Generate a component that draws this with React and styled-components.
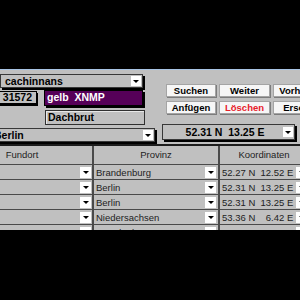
import React from "react"
import styled, { createGlobalStyle } from "styled-components"

const GlobalStyle = createGlobalStyle`
  html, body {
    margin: 0;
    padding: 0;
    background: #000;
  }
  body {
    width: 300px;
    height: 300px;
    overflow: hidden;
    font-family: "Liberation Sans", Arial, sans-serif;
  }
`

const Window = styled.div`
  margin-top: 69px;
  height: 160px;
  border-top: 1px solid #a8c4e4;
  background: #c0c0c0;
  overflow: hidden;
`

const Form = styled.div`
  display: grid;
  grid-template-columns: 162px 1fr;
  height: 74px;
`

const LeftCol = styled.div`
  display: flex;
  flex-direction: column;
  align-items: flex-start;
  padding-top: 4px;
`

const RightCol = styled.div`
  display: flex;
  flex-direction: column;
  align-items: flex-start;
  padding-top: 14px;
`

const Arrow = styled.span`
  display: flex;
  align-items: center;
  justify-content: center;
  flex: none;
  width: ${(p) => p.$size || 10}px;
  height: ${(p) => p.$size || 10}px;
  background: #fff;
  &::after {
    content: "";
    border-left: 3px solid transparent;
    border-right: 3px solid transparent;
    border-top: 3px solid #000;
  }
`

const Combo = styled.div`
  display: flex;
  align-items: center;
  justify-content: space-between;
  box-sizing: border-box;
  width: ${(p) => p.$w}px;
  height: ${(p) => p.$h || 14}px;
  margin-left: ${(p) => p.$ml || 0}px;
  margin-top: ${(p) => p.$mt || 0}px;
  padding: 0 1px 0 4px;
  border: 1px solid #383838;
  box-shadow: 2px 2px 0 #000;
  font-size: 10.5px;
  font-weight: bold;
  color: #000;
  white-space: pre;
`

const ComboText = styled.span`
  flex: 1;
  text-align: ${(p) => (p.$center ? "center" : "left")};
`

const Row = styled.div`
  display: flex;
  align-items: flex-start;
  margin-top: 2px;
`

const NumberBox = styled.div`
  box-sizing: border-box;
  width: 59px;
  height: 13px;
  margin: 1px 0 0 -22px;
  padding-right: 4px;
  border: 1px solid #000;
  box-shadow: 1px 2px 0 #000;
  text-align: right;
  font-size: 10.5px;
  font-weight: bold;
  line-height: 11px;
`

const ColorBox = styled.div`
  box-sizing: border-box;
  width: 99px;
  height: 16px;
  margin-left: 7px;
  padding-left: 2px;
  background: #560058;
  color: #fff;
  border: 1px solid #000;
  box-shadow: 2px 2px 0 #000;
  font-size: 10.5px;
  font-weight: bold;
  line-height: 13px;
  white-space: pre;
`

const TextBox = styled.div`
  box-sizing: border-box;
  width: 100px;
  height: 15px;
  margin: 4px 0 0 45px;
  padding-left: 2px;
  border: 1px solid #303030;
  box-shadow: inset 1px 1px 0 #e8e8e8;
  font-size: 10.5px;
  font-weight: bold;
  line-height: 13px;
`

const ButtonRow = styled.div`
  display: flex;
  gap: 3px;
  margin-left: 4px;
  margin-top: ${(p) => p.$mt || 0}px;
`

const Button = styled.div`
  box-sizing: border-box;
  width: ${(p) => p.$w || 50}px;
  height: 13px;
  flex: none;
  background: #f6f6f6;
  border: 1px solid #a4a4a4;
  box-shadow: 1px 1px 0 #7c7c7c;
  text-align: center;
  font-size: 9.5px;
  font-weight: bold;
  line-height: 11px;
  color: ${(p) => (p.$danger ? "#e8202a" : "#000")};
  overflow: hidden;
  white-space: nowrap;
`

const Table = styled.div`
  display: grid;
  grid-template-columns: 140px 124px 1fr;
  grid-auto-rows: 14px;
  grid-template-rows: 18px;
  column-gap: 2px;
  row-gap: 1px;
  width: 356px;
  margin-left: -48px;
  border-top: 2px solid #1c1c1c;
  background: #4a4a4a;
`

const HeadCell = styled.div`
  background: #c0c0c0;
  text-align: center;
  font-size: 9.5px;
  line-height: 18px;
  color: #222;
`

const Cell = styled.div`
  display: flex;
  align-items: center;
  justify-content: space-between;
  padding: 0 ${(p) => p.$pr || 2}px 0 2px;
  background: #c0c0c0;
  font-size: 9.5px;
  color: #222;
  white-space: pre;
`

const rows = [
  { provinz: "Brandenburg", koord: "52.27 N  12.52 E" },
  { provinz: "Berlin", koord: "52.31 N  13.25 E" },
  { provinz: "Berlin", koord: "52.31 N  13.25 E" },
  { provinz: "Niedersachsen", koord: "53.36 N  \u20076.42 E" },
  { provinz: "Brandenburg", koord: "52.52 N  13.40 E" },
]

const App = () => {
  return (
    <>
      <GlobalStyle />
      <Window>
        <Form>
          <LeftCol>
            <Combo $w={143}>
              <ComboText>cachinnans</ComboText>
              <Arrow />
            </Combo>
            <Row>
              <NumberBox>31572</NumberBox>
              <ColorBox>gelb  XNMP</ColorBox>
            </Row>
            <TextBox>Dachbrut</TextBox>
            <Combo $w={166} $ml={-11} $mt={3}>
              <ComboText>Berlin</ComboText>
              <Arrow />
            </Combo>
          </LeftCol>
          <RightCol>
            <ButtonRow>
              <Button>Suchen</Button>
              <Button $w={51}>Weiter</Button>
              <Button $w={60}>Vorheriger</Button>
            </ButtonRow>
            <ButtonRow $mt={4}>
              <Button>Anfügen</Button>
              <Button $w={51} $danger>Löschen</Button>
              <Button $w={60}>Ersetzen</Button>
            </ButtonRow>
            <Combo $w={133} $h={16} $mt={10}>
              <ComboText $center>52.31 N  13.25 E</ComboText>
              <Arrow />
            </Combo>
          </RightCol>
        </Form>
        <Table>
          <HeadCell>Fundort</HeadCell>
          <HeadCell>Provinz</HeadCell>
          <HeadCell>Koordinaten</HeadCell>
          {rows.map((r, i) => (
            <React.Fragment key={i}>
              <Cell $pr={1}>
                <span />
                <Arrow $size={11} />
              </Cell>
              <Cell>
                {r.provinz}
                <Arrow $size={11} />
              </Cell>
              <Cell $pr={1}>
                {r.koord}
                <Arrow $size={11} />
              </Cell>
            </React.Fragment>
          ))}
        </Table>
      </Window>
    </>
  )
}

export default App
